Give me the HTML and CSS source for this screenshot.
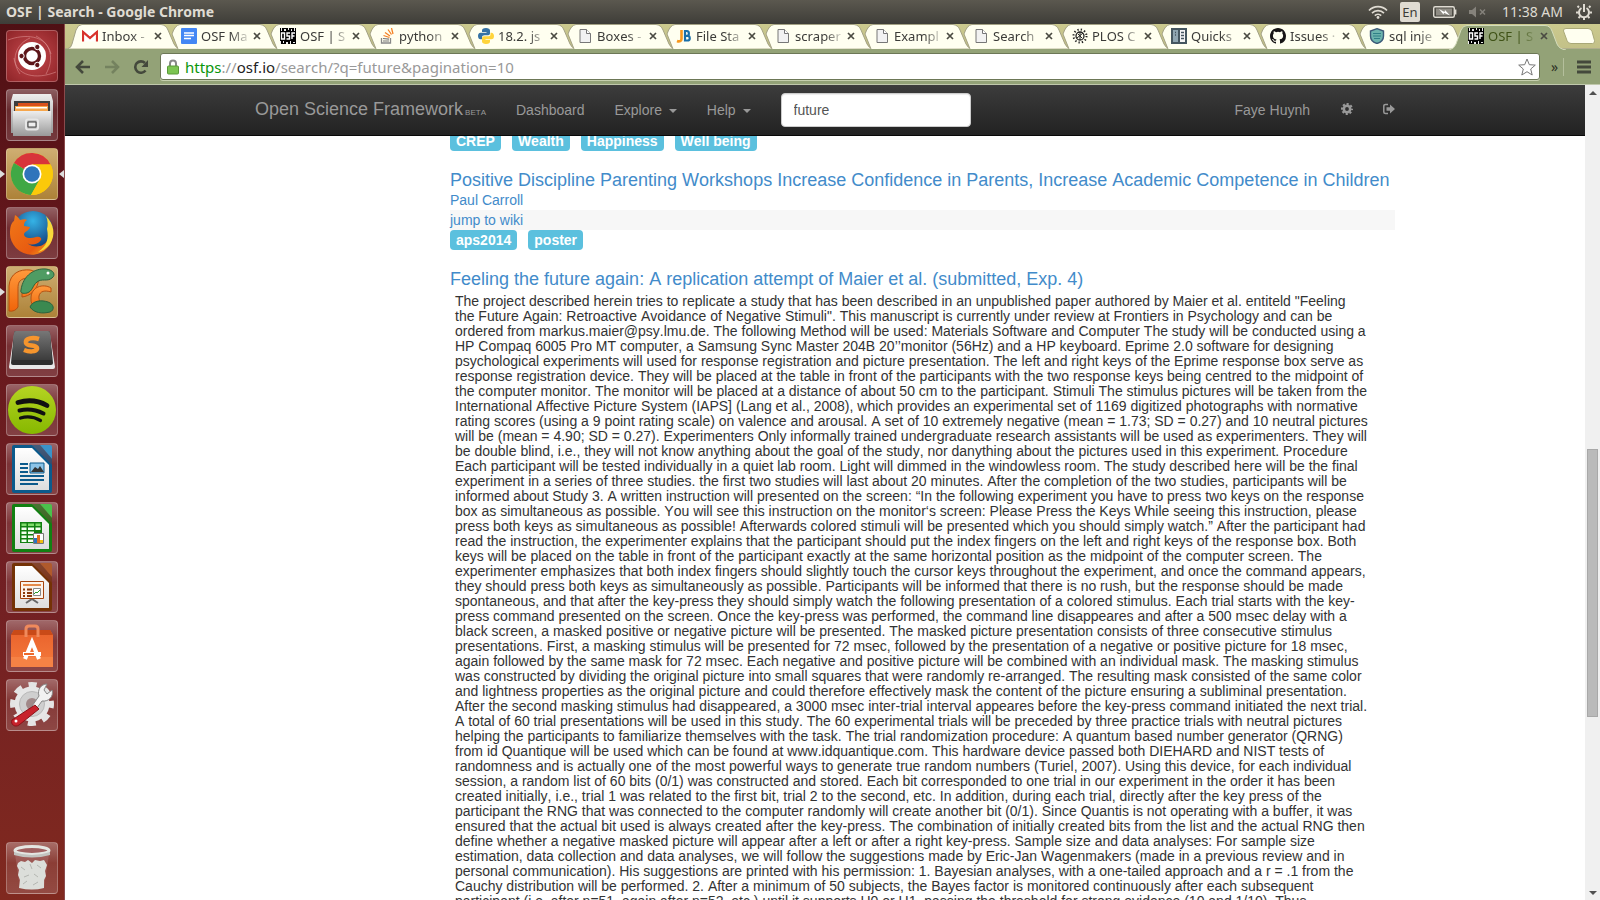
FILE: index.html
```html
<!DOCTYPE html>
<html lang="en">
<head>
<meta charset="utf-8">
<title>OSF | Search</title>
<link rel="stylesheet" href="styles.css">
</head>
<body>
<svg class="defs" aria-hidden="true">
  <defs>
    <linearGradient id="g-metal" x1="0" y1="0" x2="0" y2="1"><stop offset="0" stop-color="#eeeeee"/><stop offset="1" stop-color="#999"/></linearGradient>
    <linearGradient id="g-key" x1="0" y1="0" x2="0" y2="1"><stop offset="0" stop-color="#777"/><stop offset="1" stop-color="#3c3c3c"/></linearGradient>
    <linearGradient id="g-orange" x1="0" y1="0" x2="0" y2="1"><stop offset="0" stop-color="#ff9a3c"/><stop offset="1" stop-color="#f0640a"/></linearGradient>
    <linearGradient id="g-bag" x1="0" y1="0" x2="0" y2="1"><stop offset="0" stop-color="#e9622c"/><stop offset="1" stop-color="#f47a3c"/></linearGradient>
    <radialGradient id="g-globe" cx=".5" cy=".25" r=".7"><stop offset="0" stop-color="#35b3e6"/><stop offset="1" stop-color="#123a78"/></radialGradient>
    <linearGradient id="g-fox" x1="0" y1="0" x2="1" y2="1"><stop offset="0" stop-color="#f07818"/><stop offset=".7" stop-color="#e85a10"/><stop offset="1" stop-color="#f8b020"/></linearGradient>
    <linearGradient id="g-spot" x1="0" y1="0" x2="0" y2="1"><stop offset="0" stop-color="#b5d422"/><stop offset="1" stop-color="#86b800"/></linearGradient>
    <linearGradient id="g-page" x1="0" y1="0" x2="0" y2="1"><stop offset="0" stop-color="#fff"/><stop offset="1" stop-color="#dedede"/></linearGradient>
    <symbol id="tab-shape" viewBox="0 0 111 25"><path d="M11 25 L5 10 Q8 1 13 .5 H93 Q98 1 100 6 L106 20 Q108 24 111 24.500" class="tab-path"/></symbol>
    <symbol id="tab-first" viewBox="0 0 111 25"><path d="M0 24.500 Q3 24 4 20 L8 6 Q10 .5 14 .5 H93 Q98 1 100 6 L106 20 Q108 24 111 24.500" class="tab-path"/></symbol>
    <symbol id="tab-on" viewBox="0 0 117 26"><path d="M0 26 Q5 25 7 20 L12 6 Q14 1.500 18 1.500 H96 Q101 1.500 103 7 L108 20 Q110 25 117 26" class="tab-path-on"/></symbol>
    <symbol id="i-x" viewBox="0 0 8 8"><path d="M1 1 7 7M7 1 1 7" stroke="#4a4a42" stroke-width="1.700"/></symbol>
    <symbol id="i-doc" viewBox="0 0 16 16"><path d="M3 1.500h6.500l4 4v9H3z" fill="#f2f2f2" stroke="#777"/><path d="M9.500 1.500v4h4" fill="#fff" stroke="#777"/></symbol>
    <symbol id="i-osf" viewBox="0 0 16 16"><path d="M0 0h16v16H0z" fill="#000"/><path d="M1 0h1v3H1zM4 1h2v2H4zM8 0h1v2H8zM11 1h1v2h-1zM14 0h1v3h-1zM0 13h1v3H0zM3 13h1v2H3zM6 14h2v2H6zM10 13h1v3h-1zM13 14h2v1h-2z" fill="#eee"/><path d="M1.500 5h3v6h-3zM10 5h-3v3h2.500v3H6.500M15 5h-3v6M12 8h2.500" fill="none" stroke="#fff" stroke-width="1.400"/></symbol>
  </defs>
</svg>

<header class="panel">
  <span class="panel-title">OSF | Search - Google Chrome</span>
  <div class="panel-tray">
    <svg class="wifi" viewBox="0 0 20 14"><g fill="none" stroke="#dfdbd2" stroke-width="1.700"><path d="M1 5.500a12.500 12.500 0 0 1 18 0M4 8.200a8.500 8.500 0 0 1 12 0M6.800 10.600a4.600 4.600 0 0 1 6.400 0"/></g><circle cx="10" cy="12.500" r="1.400" fill="#dfdbd2"/></svg>
    <span class="lang">En</span>
    <svg class="batt" viewBox="0 0 24 14"><rect x=".7" y="1.700" width="20.600" height="10.600" rx="1.500" fill="none" stroke="#dfdbd2" stroke-width="1.400"/><path d="M22.500 4.500v5" stroke="#dfdbd2" stroke-width="1.800"/><path d="M3 3.500h16v7H3z" fill="#8f8c84"/><path d="M6 4 11.500 7 12 5 17 10.500 11 7.800 10.500 9.500z" fill="#fff"/></svg>
    <svg class="mute" viewBox="0 0 18 12"><path d="M0 4h3l4-3.500v11L3 8H0z" fill="#85827b"/><path d="m11 3.500 5 5m0-5-5 5" stroke="#85827b" stroke-width="1.500"/></svg>
    <span class="clock">11:38 AM</span>
    <svg class="power" viewBox="0 0 16 16"><g fill="none" stroke="#dfdbd2"><path d="M5.500 4a5 5 0 1 0 5 0" stroke-width="2"/><path d="M8 0v8" stroke-width="2"/><path d="M3 3.500 1.500 2M13 3.500 14.500 2M2.500 8.500H0M13.500 8.500H16M4 12.500 2.500 14M12 12.500 13.500 14M8 13.500V16" stroke-width="2"/></g></svg>
  </div>
</header>

<div class="desktop">
  <nav class="launcher" aria-label="Launcher">
    <button class="tile red" aria-label="Dash"><svg viewBox="0 0 52 52"><g fill="none" stroke="#e5a0a0" stroke-opacity=".5"><path d="M2 10C18 4 40 4 45 24M50 42C30 50 10 46 8 28M30 6c16 8 18 24 10 38M14 44C4 30 10 14 24 8"/></g><circle cx="26" cy="26" r="14" fill="#fff"/><circle cx="26" cy="26" r="7.500" fill="none" stroke="#5d1519" stroke-width="3.400"/><g fill="#5d1519" stroke="#fff"><circle cx="15.500" cy="26" r="2.700"/><circle cx="31.300" cy="17" r="2.700"/><circle cx="31.300" cy="35" r="2.700"/></g></svg></button>
    <button class="tile" aria-label="Files"><svg viewBox="0 0 52 52"><path d="M7 5h38l2 7v32H5V12z" fill="url(#g-metal)"/><path d="M8 12h36v12H8z" fill="#3d3d3d"/><path d="M12 14h30v9H12z" fill="#d8501c"/><path d="M9 17h33v6H9z" fill="#f6a64c"/><path d="M10 18h31v1.500H10z" fill="#fff"/><path d="M7 22h38v25H7z" fill="url(#g-metal)"/><rect x="20" y="30.500" width="12" height="10" rx="2" fill="#aaa" stroke="#e6e6e6" stroke-width="2"/><path d="M22 33h8v5h-8z" fill="#eee" stroke="#444"/></svg></button>
    <button class="tile gold run focus" aria-label="Google Chrome"><svg viewBox="0 0 52 52"><circle cx="26" cy="26" r="21" fill="#fbc90a"/><path d="M26 26 8 15A21 21 0 0 1 44.500 16.500H26z" fill="#d8343a"/><path d="M26 26 8 15A21 21 0 0 0 25 47L34 31z" fill="#3fa845"/><path d="M26 16.500h18.500A21 21 0 0 1 25 47l9-16z" fill="#fbc90a"/><circle cx="26" cy="26" r="9.500" fill="#fff"/><circle cx="26" cy="26" r="7.800" fill="#2f74bb"/></svg></button>
    <button class="tile" aria-label="Firefox"><svg viewBox="0 0 52 52"><circle cx="27" cy="24" r="20" fill="url(#g-globe)"/><path d="M4 27C4 20 5 16 8 14l1-6c2 1 4 3 5 5 3-1 6-1 7 0-3 2-3 4-3 6l6 1c-1 4-5 4-6 7 0 4 6 5 12 3 4-1 6 1 5 3-4 6-12 5-14 3 7 6 18 4 21-4 2-6 0-9 1-14 5 8 4 18-2 23-8 9-22 9-31 0-4-5-6-9-6-14z" fill="url(#g-fox)"/><path d="M40 9c8 8 10 19 4 28-4 5-8 7-12 8 9-6 11-13 9-23 1-4 1-8-1-13z" fill="#f9d83b"/></svg></button>
    <button class="tile gold run" aria-label="PyCharm"><svg viewBox="0 0 52 52"><path d="M3 45V20C4 7 14 3 24 4c7 1 9 6 8 13-2 8-8 13-16 14v-7c5-1 8-3 8-8 0-4-4-4-7-3-5 2-5 6-5 11v17q-3 5-9 4z" fill="url(#g-orange)" stroke="#b65010"/><path d="M45 22c-8-5-20-1-20 10-1 9 8 14 18 13v-5c-7-1-11-5-10-10 1-5 6-6 12-4z" fill="url(#g-orange)" stroke="#b65010"/><path d="M15 24C17 9 29 2 40 3c8 1 10 6 6 9-5 4-10 0-15 4-5 4-4 9-10 11-4 1-7 0-6-3z" fill="#4f9c63" stroke="#2c633d"/><path d="M24 41c3-7 12-7 18-5 6 2 7 8 2 10-8 2-16 1-20-5z" fill="#3b8950" stroke="#2c633d"/><circle cx="42" cy="7" r="1.500" fill="#fff"/></svg></button>
    <button class="tile" aria-label="Sublime Text"><svg viewBox="0 0 52 52"><path d="M8 9h36l5 33q0 2-2 2H5q-2 0-2-2z" fill="#e8e8e8"/><path d="M10 6h32q2 0 2 2l3 30q0 2-2 2H7q-2 0-2-2L8 8q0-2 2-2z" fill="#2e2e2e"/><path d="M10 6h32q2 0 2 2l2 27H6L8 8q0-2 2-2z" fill="url(#g-key)"/><path d="M33 14c-6-2-14-1-13 4 1 4 12 1 11 6-1 3-8 3-13 1" fill="none" stroke="#f6952d" stroke-width="4.500"/></svg></button>
    <button class="tile" aria-label="Spotify"><svg viewBox="0 0 52 52"><circle cx="26" cy="26" r="24" fill="url(#g-spot)"/><g fill="none" stroke="#111" stroke-linecap="round"><path d="M12 18.500c10-3 21-1.500 29 3" stroke-width="4.800"/><path d="M13.500 26.500c8-2 16-1 24 3" stroke-width="4"/><path d="M14.500 34c7-2 14-1 20 2.500" stroke-width="3.200"/></g></svg></button>
    <button class="tile" aria-label="Writer"><svg viewBox="0 0 52 52"><path d="M8 2h18l20 20v26q0 2-2 2H8q-2 0-2-2V4q0-2 2-2z" fill="#0b5a8c"/><path d="M34 2h10q2 0 2 2v12z" fill="#3a92c8"/><path d="M26 2h8l12 14v8z" fill="#0b5a8c" fill-opacity=".6"/><path d="M9 5h17l17 17v25H9z" fill="url(#g-page)"/><path d="M14 21h8M14 25h8M14 29h8M14 33h24M14 37h24M14 41h18" stroke="#0b5a8c" stroke-width="2"/><path d="M24 20h14v10H24z" fill="#8cc4e8" stroke="#0b5a8c"/><path d="m25 29 4-5 3 2 2-3 4 6z" fill="#333"/></svg></button>
    <button class="tile" aria-label="Calc"><svg viewBox="0 0 52 52"><path d="M8 2h18l20 20v26q0 2-2 2H8q-2 0-2-2V4q0-2 2-2z" fill="#128012"/><path d="M34 2h10q2 0 2 2v12z" fill="#4bc14b"/><path d="M26 2h8l12 14v8z" fill="#128012" fill-opacity=".6"/><path d="M9 5h17l17 17v25H9z" fill="url(#g-page)"/><path d="M14 20h22v21H14z" fill="#128012"/><path d="M15.500 21.500h5v2.500h-5zM22 21.500h6v2.500h-6zM29.500 21.500h5v2.500h-5z" fill="#7fdc6a"/><path d="M15.500 25.500h5V28h-5zM22 25.500h6V28h-6zM29.500 25.500h5V28h-5zM15.500 29.500h5V32h-5zM22 29.500h6V32h-6zM15.500 33.500h5V36h-5zM22 33.500h6V36h-6zM15.500 37.500h5V40h-5zM22 37.500h6V40h-6z" fill="#f4fff0"/><path d="M27.500 31.500h10v10h-10z" fill="#fff" stroke="#777"/><path d="M28 36h3v5h-3z" fill="#2a74c0"/><path d="M31 33h3v8h-3z" fill="#e07020"/><path d="M34 38h3v3h-3z" fill="#f0c010"/></svg></button>
    <button class="tile" aria-label="Impress"><svg viewBox="0 0 52 52"><path d="M8 2h18l20 20v26q0 2-2 2H8q-2 0-2-2V4q0-2 2-2z" fill="#743206"/><path d="M34 2h10q2 0 2 2v12z" fill="#b05a2c"/><path d="M26 2h8l12 14v8z" fill="#743206" fill-opacity=".6"/><path d="M9 5h17l17 17v25H9z" fill="url(#g-page)"/><path d="M20 42 26 38l6 4" fill="none" stroke="#666" stroke-width="2"/><path d="M14.500 20.500h23v17h-23z" fill="#fdf3ea" stroke="#a5430c"/><path d="M17 24h18" stroke="#e58a4a" stroke-width="2"/><path d="M17 28.500h2M17 32h2M17 35h2M21 28.500h5M21 32h5M21 35h5" stroke="#8b3a0c" stroke-width="2"/><path d="M27.500 27.500h7v7h-7z" fill="#fff" stroke="#888"/><path d="m28 33 2-2 1 1 3-3" fill="none" stroke="#2a9a2a"/></svg></button>
    <button class="tile" aria-label="Software Center"><svg viewBox="0 0 52 52"><path d="M8 10h36l3 5v32H5V15z" fill="url(#g-bag)"/><path d="M5 15 8 10h36l3 5z" fill="#c94a18"/><path d="M5 37h42v10H5z" fill="#f58245"/><path d="M20 17V9q0-3 3-3h6q3 0 3 3v8" fill="none" stroke="#f08a5c" stroke-width="3"/><path d="M19 39 26 22l7 17" fill="none" stroke="#fff" stroke-width="4"/><path d="M17 32h18v4H17z" fill="#fff"/><path d="M18 33h10v2H18z" fill="#ee6a2c"/></svg></button>
    <button class="tile" aria-label="System Settings"><svg viewBox="0 0 52 52"><circle cx="26" cy="25" r="19" fill="none" stroke="#e4e4e4" stroke-width="6" stroke-dasharray="8 6.923" stroke-dashoffset="4"/><circle cx="26" cy="25" r="17.500" fill="#e6e6e6"/><circle cx="26" cy="25" r="12.500" fill="#cfcfcf" stroke="#b8b8b8"/><circle cx="26" cy="25" r="6" fill="#a08888"/><path d="m24 30 9-13c-2-6 2-12 8-12l-3 6 3 4 5-4c2 6-3 12-10 11l-8 11z" fill="#f2f2f2" stroke="#888"/><path d="m29 26 4 4-20 16c-4 3-9-1-7-5z" fill="#c8232c" stroke="#8a1218"/><circle cx="10" cy="42" r="1.500" fill="#fff"/></svg></button>
    <button class="tile trash" aria-label="Trash"><svg viewBox="0 0 52 52"><path d="M9 12h34l-5 34q-12 3-24 0z" fill="#b47a7a" fill-opacity=".4"/><path d="m12 21 3-2 4 1 3-2 4 3 3-3 5 1 4-1 3 5-2 6 1 5-2 4v8q-12 3-25 0l1-8-2-5 1-5-2-4z" fill="#dcdeda"/><path d="m15 25 4 3M24 22l2 5M31 23l4 3M18 35l5-2M28 32l4 3M17 42l4-3M27 43l5-3" fill="none" stroke="#b4b6b1"/><ellipse cx="26" cy="8.500" rx="17" ry="4" fill="#a06060" stroke="#e4e6e2" stroke-width="3"/><path d="M8 10q18 6 36 0v3q-18 5-36 0z" fill="#c2c4c0"/></svg></button>
  </nav>

  <section class="browser">
    <div class="tabs">
      <div class="tab"><svg class="shape first"><use href="#tab-first"/></svg><svg class="fav" viewBox="0 0 16 16"><path d="M0 2.500h16v11H0z" fill="#fff"/><path d="M1 13.500V4l7 6 7-6v9.500" fill="none" stroke="#d8322c" stroke-width="2.200"/><path d="m1 3 7 6.500L15 3" fill="none" stroke="#d8322c"/></svg><span class="tab-name">Inbox -</span><button class="tab-x" aria-label="Close"><svg viewBox="0 0 8 8"><use href="#i-x"/></svg></button></div>
      <div class="tab"><svg class="shape"><use href="#tab-shape"/></svg><svg class="fav" viewBox="0 0 16 16"><rect width="16" height="16" rx="1" fill="#4387f4"/><path d="M3 5h10M3 7.500h10M3 10.500h7" stroke="#fff" stroke-width="1.300"/></svg><span class="tab-name">OSF Ma</span><button class="tab-x" aria-label="Close"><svg viewBox="0 0 8 8"><use href="#i-x"/></svg></button></div>
      <div class="tab"><svg class="shape"><use href="#tab-shape"/></svg><svg class="fav"><use href="#i-osf"/></svg><span class="tab-name">OSF | S</span><button class="tab-x" aria-label="Close"><svg viewBox="0 0 8 8"><use href="#i-x"/></svg></button></div>
      <div class="tab"><svg class="shape"><use href="#tab-shape"/></svg><svg class="fav" viewBox="0 0 16 16"><path d="M2.500 10v5h9v-5" fill="none" stroke="#888" stroke-width="1.300"/><path d="M4 13h6M4 10.500l6 .6" stroke="#777" stroke-width="1.200"/><path d="m4.500 7.500 6 2M6 4.500l5 3.500M9 1.500l3.500 5M12.500 0l1.500 6" stroke="#f48024" stroke-width="1.300"/></svg><span class="tab-name">python</span><button class="tab-x" aria-label="Close"><svg viewBox="0 0 8 8"><use href="#i-x"/></svg></button></div>
      <div class="tab"><svg class="shape"><use href="#tab-shape"/></svg><svg class="fav" viewBox="0 0 16 16"><path d="M8 0c-3 0-4 1-4 2.500V4h4.500v.7H2.500C.8 4.700 0 6 0 8s1 3.300 2.500 3.300H4V9.500C4 8 5 7.300 6.500 7.300h3.700c1 0 1.800-.8 1.800-2V2.500C12 1 10.500 0 8 0z" fill="#3572a5"/><path d="M8 16c3 0 4-1 4-2.500V12H7.500v-.7h6c1.700 0 2.500-1.300 2.500-3.300s-1-3.300-2.500-3.300h-1v1.800C12.500 8 11 8.300 9.500 8.300H6c-1 0-2 .8-2 2v3.200C4 15 5.500 16 8 16z" fill="#ffd43b"/></svg><span class="tab-name">18.2. js</span><button class="tab-x" aria-label="Close"><svg viewBox="0 0 8 8"><use href="#i-x"/></svg></button></div>
      <div class="tab"><svg class="shape"><use href="#tab-shape"/></svg><svg class="fav"><use href="#i-doc"/></svg><span class="tab-name">Boxes -</span><button class="tab-x" aria-label="Close"><svg viewBox="0 0 8 8"><use href="#i-x"/></svg></button></div>
      <div class="tab"><svg class="shape"><use href="#tab-shape"/></svg><svg class="fav" viewBox="0 0 16 16"><path d="M5.500 2v9c0 2-2 3-4.500 2" fill="none" stroke="#f8981d" stroke-width="2.600"/><path d="M9 3v9.500h2.500c3 0 3-4.700 0-4.700H9h2c2.500 0 2.500-4.800 0-4.800z" fill="none" stroke="#1a6fa8" stroke-width="2.200"/></svg><span class="tab-name">File Sta</span><button class="tab-x" aria-label="Close"><svg viewBox="0 0 8 8"><use href="#i-x"/></svg></button></div>
      <div class="tab"><svg class="shape"><use href="#tab-shape"/></svg><svg class="fav"><use href="#i-doc"/></svg><span class="tab-name">scraper</span><button class="tab-x" aria-label="Close"><svg viewBox="0 0 8 8"><use href="#i-x"/></svg></button></div>
      <div class="tab"><svg class="shape"><use href="#tab-shape"/></svg><svg class="fav"><use href="#i-doc"/></svg><span class="tab-name">Exampl</span><button class="tab-x" aria-label="Close"><svg viewBox="0 0 8 8"><use href="#i-x"/></svg></button></div>
      <div class="tab"><svg class="shape"><use href="#tab-shape"/></svg><svg class="fav"><use href="#i-doc"/></svg><span class="tab-name">Search</span><button class="tab-x" aria-label="Close"><svg viewBox="0 0 8 8"><use href="#i-x"/></svg></button></div>
      <div class="tab"><svg class="shape"><use href="#tab-shape"/></svg><svg class="fav" viewBox="0 0 16 16"><circle cx="8" cy="8" r="6.500" fill="none" stroke="#222" stroke-width="2" stroke-dasharray="1.300 2.100"/><circle cx="8" cy="8" r="4" fill="none" stroke="#222" stroke-width="1.300"/><path d="m5 10 6-5M6 6l4 4M8 4v8" stroke="#222"/></svg><span class="tab-name">PLOS C</span><button class="tab-x" aria-label="Close"><svg viewBox="0 0 8 8"><use href="#i-x"/></svg></button></div>
      <div class="tab"><svg class="shape"><use href="#tab-shape"/></svg><svg class="fav" viewBox="0 0 16 16"><path d="M0 0h16v16H0z" fill="#45565f"/><path d="M2 2h5v12H2z" fill="#8fa5b0"/><path d="M9 2h5v12H9z" fill="#f4f4f4"/><path d="M10 4.500h3M10 7.500h3M10 10.500h3M4 4.500h1M4 7h1" stroke="#45565f" stroke-width="1.400"/></svg><span class="tab-name">Quicks</span><button class="tab-x" aria-label="Close"><svg viewBox="0 0 8 8"><use href="#i-x"/></svg></button></div>
      <div class="tab"><svg class="shape"><use href="#tab-shape"/></svg><svg class="fav" viewBox="0 0 16 16"><path fill="#171515" d="M8 0C3.580 0 0 3.580 0 8c0 3.540 2.290 6.530 5.470 7.590.4.070.55-.17.55-.38 0-.19-.01-.82-.01-1.490-2.010.37-2.530-.49-2.690-.94-.09-.23-.48-.94-.82-1.130-.28-.15-.68-.52-.01-.53.63-.01 1.080.58 1.230.82.72 1.210 1.870.87 2.330.66.070-.52.28-.87.51-1.070-1.780-.2-3.640-.89-3.640-3.950 0-.87.31-1.590.82-2.150-.08-.2-.36-1.020.08-2.120 0 0 .67-.21 2.200.82a7.600 7.600 0 0 1 4 0c1.530-1.040 2.200-.82 2.200-.82.44 1.100.16 1.920.08 2.120.51.56.82 1.270.82 2.150 0 3.070-1.870 3.750-3.650 3.950.29.25.54.73.54 1.480 0 1.070-.01 1.930-.01 2.200 0 .21.15.46.55.38A8 8 0 0 0 16 8c0-4.420-3.580-8-8-8z"/></svg><span class="tab-name">Issues ·</span><button class="tab-x" aria-label="Close"><svg viewBox="0 0 8 8"><use href="#i-x"/></svg></button></div>
      <div class="tab"><svg class="shape"><use href="#tab-shape"/></svg><svg class="fav" viewBox="0 0 16 16"><path d="M8 .7 14.500 3v5c0 4-3 6.500-6.500 7.500C4.500 14.500 1.500 12 1.500 8V3z" fill="#6cb3ad" stroke="#3b5a78" stroke-width="1.400"/><path d="M4 5.500h8M4 8h8M5 10.500h6" stroke="#2e7f86"/></svg><span class="tab-name">sql inje</span><button class="tab-x" aria-label="Close"><svg viewBox="0 0 8 8"><use href="#i-x"/></svg></button></div>
      <div class="tab on"><svg class="shape"><use href="#tab-on"/></svg><svg class="fav"><use href="#i-osf"/></svg><span class="tab-name">OSF | S</span><button class="tab-x" aria-label="Close"><svg viewBox="0 0 8 8"><use href="#i-x"/></svg></button></div>
      <button class="new-tab" aria-label="New tab"><svg viewBox="0 0 32 16"><path d="M3 .5h22q3 0 4 3l2.500 9q.5 3-2 3H8q-3 0-4-3L.5 3Q0 .5 3 .5z" fill="#fffff0" stroke="#a9a878"/></svg></button>
    </div>

    <div class="toolbar">
      <button class="tool" aria-label="Back"><svg viewBox="0 0 16 14"><path d="M8 1 2 7l6 6M2.500 7H15" fill="none" stroke="#44493c" stroke-width="2.600"/></svg></button>
      <button class="tool" aria-label="Forward"><svg viewBox="0 0 16 14"><path d="m8 1 6 6-6 6M13.500 7H1" fill="none" stroke="#74825f" stroke-width="2.600"/></svg></button>
      <button class="tool" aria-label="Reload"><svg viewBox="0 0 16 14"><path d="M12.500 10.500A5.700 5.700 0 1 1 12 3" fill="none" stroke="#44493c" stroke-width="2.600"/><path d="M15 0v7H8.500z" fill="#44493c"/></svg></button>
      <div class="omnibox">
        <svg class="lock" viewBox="0 0 12 16"><path d="M3 8V4.500a3 3 0 0 1 6 0V8" fill="none" stroke="#888" stroke-width="2"/><rect x=".5" y="7" width="11" height="8" rx="1" fill="#7cc552" stroke="#5a9a38"/></svg>
        <div class="url"><span class="scheme">https</span>://<span class="host">osf.io</span>/search/?q=future&amp;pagination=10</div>
        <svg class="star" viewBox="0 0 18 18"><path d="m9 1 2.300 5.700 6 .4-4.600 3.900 1.500 6L9 13.700 3.800 17l1.500-6L.7 7.100l6-.4z" fill="#fff" stroke="#777"/></svg>
      </div>
      <span class="more">»</span>
      <button class="menu" aria-label="Menu"><svg viewBox="0 0 14 14"><path d="M0 2h14M0 7h14M0 12h14" stroke="#44493c" stroke-width="3"/></svg></button>
    </div>

    <div class="viewport">
      <div class="page">
        <nav class="navbar">
          <div class="container">
            <a class="brand" href="#">Open Science Framework<small>BETA</small></a>
            <a class="nav-link" href="#">Dashboard</a>
            <a class="nav-link" href="#">Explore <i class="caret"></i></a>
            <a class="nav-link" href="#">Help <i class="caret"></i></a>
            <form class="search"><input type="text" value="future" aria-label="Search"></form>
            <a class="nav-link user" href="#">Faye Huynh</a>
            <a class="nav-link" href="#" aria-label="Settings"><svg class="ico" viewBox="0 0 12 12"><circle cx="6" cy="6" r="3.200" fill="none" stroke="#999" stroke-width="2.600"/><circle cx="6" cy="6" r="5" fill="none" stroke="#999" stroke-width="2" stroke-dasharray="2.100 1.827" stroke-dashoffset="1"/></svg></a>
            <a class="nav-link" href="#" aria-label="Log out"><svg class="ico" viewBox="0 0 12 12"><path d="M5 1.500H2.500Q.8 1.500.8 3v6q0 1.500 1.700 1.500H5" fill="none" stroke="#999" stroke-width="1.500"/><path d="M3.500 4.200H7V1.500L12 6l-5 4.500V7.800H3.500z" fill="#999"/></svg></a>
          </div>
        </nav>
        <main class="container results">
          <div class="col">
            <div class="tags"><a href="#">CREP</a><a href="#">Wealth</a><a href="#">Happiness</a><a href="#">Well being</a></div>
            <article>
              <h4><a href="#">Positive Discipline Parenting Workshops Increase Confidence in Parents, Increase Academic Competence in Children</a></h4>
              <div><a href="#">Paul Carroll</a></div>
              <div class="wiki"><a href="#">jump to wiki</a></div>
              <div class="tags"><a href="#">aps2014</a><a href="#">poster</a></div>
            </article>
            <article>
              <h4><a href="#">Feeling the future again: A replication attempt of Maier et al. (submitted, Exp. 4)</a></h4>
              <p class="desc">The project described herein tries to replicate a study that has been described in an unpublished paper authored by Maier et al. entiteld "Feeling
the Future Again: Retroactive Avoidance of Negative Stimuli". This manuscript is currently under review at Frontiers in Psychology and can be
ordered from markus.maier@psy.lmu.de. The following Method will be used: Materials Software and Computer The study will be conducted using a
HP Compaq 6005 Pro MT computer, a Samsung Sync Master 204B 20’’monitor (56Hz) and a HP keyboard. Eprime 2.0 software for designing
psychological experiments will used for response registration and picture presentation. The left and right keys of the Eprime response box serve as
response registration device. They will be placed at the table in front of the participants with the two response keys being centred to the midpoint of
the computer monitor. The monitor will be placed at a distance of about 50 cm to the participant. Stimuli The stimulus pictures will be taken from the
International Affective Picture System (IAPS] (Lang et al., 2008), which provides an experimental set of 1169 digitized photographs with normative
rating scores (using a 9 point rating scale) on valence and arousal. A set of 10 extremely negative (mean = 1.73; SD = 0.27) and 10 neutral pictures
will be (mean = 4.90; SD = 0.27). Experimenters Only informally trained undergraduate research assistants will be used as experimenters. They will
be double blind, i.e., they will not know anything about the goal of the study, nor danything about the pictures used in this experiment. Procedure
Each participant will be tested individually in a quiet lab room. Light will dimmed in the windowless room. The study described here will be the final
experiment in a series of three studies. the first two studies will last about 20 minutes. After the completion of the two studies, participants will be
informed about Study 3. A written instruction will presented on the screen: “In the following experiment you have to press two keys on the response
box as simultaneous as possible. You will see this instruction on the monitor‘s screen: Please Press the Keys While seeing this instruction, please
press both keys as simultaneous as possible! Afterwards colored stimuli will be presented which you should simply watch.” After the participant had
read the instruction, the experimenter explains that the participant should put the index fingers on the left and right keys of the response box. Both
keys will be placed on the table in front of the participant exactly at the same horizontal position as the midpoint of the computer screen. The
experimenter emphasizes that both index fingers should slightly touch the cursor keys throughout the experiment, and once the command appears,
they should press both keys as simultaneously as possible. Participants will be informed that there is no rush, but the response should be made
spontaneous, and that after the key-press they should simply watch the following presentation of a colored stimulus. Each trial starts with the key-
press command presented on the screen. Once the key-press was performed, the command line disappeares and after a 500 msec delay with a
black screen, a masked positive or negative picture will be presented. The masked picture presentation consists of three consecutive stimulus
presentations. First, a masking stimulus will be presented for 72 msec, followed by the presentation of a negative or positive picture for 18 msec,
again followed by the same mask for 72 msec. Each negative and positive picture will be combined with an individual mask. The masking stimulus
was constructed by dividing the original picture into small squares that were randomly re-arranged. The resulting mask consisted of the same color
and lightness properties as the original picture and could therefore effectively mask the content of the picture ensuring a subliminal presentation.
After the second masking stimulus had disappeared, a 3000 msec inter-trial interval appeares before the key-press command initiated the next trial.
A total of 60 trial presentations will be used in this study. The 60 experimental trials will be preceded by three practice trials with neutral pictures
helping the participants to familiarize themselves with the task. The trial randomization procedure: A quantum based number generator (QRNG)
from id Quantique will be used which can be found at www.idquantique.com. This hardware device passed both DIEHARD and NIST tests of
randomness and is actually one of the most powerful ways to generate true random numbers (Turiel, 2007). Using this device, for each individual
session, a random list of 60 bits (0/1) was constructed and stored. Each bit corresponded to one trial in our experiment in the order it has been
created initially, i.e., trial 1 was related to the first bit, trial 2 to the second, etc. In addition, during each trial, directly after the key press of the
participant the RNG that was connected to the computer randomly will create another bit (0/1). Since Quantis is not operating with a buffer, it was
ensured that the actual bit used is always created after the key-press. The combination of initially created bits from the list and the actual RNG then
define whether a negative masked picture will appear after a left or after a right key-press. Sample size and data analyses: For sample size
estimation, data collection and data analyses, we will follow the suggestions made by Eric-Jan Wagenmakers (made in a previous review and in
personal communication). His suggestions are printed with his permission: 1. Bayesian analyses, with a one-tailed approach and a r = .1 from the
Cauchy distribution will be performed. 2. After a minimum of 50 subjects, the Bayes factor is monitored continuously after each subsequent
participant (i.e. after n=51, again after n=52, etc.) until it supports H0 or H1, passing the threshold for strong evidence (10 and 1/10). Thus</p>
            </article>
          </div>
        </main>
      </div>
      <div class="scrollbar">
        <i class="arrow up"></i><i class="gap-top"></i><i class="thumb"></i><i class="gap-bottom"></i><i class="arrow down"></i>
      </div>
    </div>
  </section>
</div>
</body>
</html>
```

FILE: styles.css
```css
* { box-sizing: border-box; }
html, body { height: 100%; }
body {
  margin: 0;
  display: flex;
  flex-direction: column;
  overflow: hidden;
  font: 14px/20px "Liberation Sans", Arial, sans-serif;
  font-kerning: none;
  color: #333;
  background: #fff;
}
button { border: 0; padding: 0; background: none; font: inherit; color: inherit; }
a { color: #428bca; text-decoration: none; }
svg { display: block; }
.defs { position: absolute; width: 0; height: 0; }

/* top panel */
.panel {
  flex: none;
  height: 24px;
  display: flex;
  align-items: center;
  justify-content: space-between;
  padding: 0 8px 0 6px;
  background: linear-gradient(#5b584f, #3e3d38);
  color: #dfdbd2;
  font-family: "Noto Sans", sans-serif;
  font-size: 14px;
}
.panel-title { font-weight: 700; }
.panel-tray { display: flex; align-items: center; }
.wifi { width: 20px; height: 14px; margin-right: 12px; }
.lang { width: 20px; height: 20px; margin-right: 13px; border-radius: 2px; background: #dfdbd2; color: #3c3b37; text-align: center; font-size: 13px; }
.batt { width: 24px; height: 14px; margin-right: 12px; }
.mute { width: 18px; height: 12px; margin-right: 15px; }
.clock { margin-right: 13px; }
.power { width: 16px; height: 16px; }

.desktop { flex: 1; min-height: 0; display: flex; }

/* launcher */
.launcher {
  flex: none;
  width: 65px;
  display: flex;
  flex-direction: column;
  gap: 7px;
  padding: 6px 7px 6px 6px;
  background: linear-gradient(#4f1014, #64171c 25%, #722023 65%, #80291f);
  border-right: 1px solid #8a4a4c;
}
.tile {
  position: relative;
  flex: none;
  width: 52px;
  height: 52px;
  border-radius: 4px;
  border: 1px solid rgba(255, 255, 255, .25);
  background: linear-gradient(rgba(255, 255, 255, .32), rgba(255, 255, 255, .1) 40%, rgba(255, 255, 255, .16));
}
.tile svg { width: 52px; height: 52px; margin: -1px; }
.tile.red { background: radial-gradient(#c84a4e, #8e2428); }
.tile.gold { background: linear-gradient(#cfae72, #ad8238); }
.tile.run::before, .tile.focus::after {
  content: "";
  position: absolute;
  top: 21px;
  border: 4px solid transparent;
}
.tile.run::before { left: -7px; border-left: 5px solid #ddd; border-right: 0; }
.tile.focus::after { right: -7px; border-right: 5px solid #ddd; border-left: 0; }
.trash { margin-top: auto; }

/* browser chrome */
.browser { flex: 1; min-width: 0; display: flex; flex-direction: column; }
.tabs {
  flex: none;
  height: 25px;
  display: flex;
  align-items: center;
  padding-left: 3px;
  background: linear-gradient(#cbc98e, #c3c188);
  border-bottom: 1px solid #b0ae8c;
  font-family: "Noto Sans", sans-serif;
  color: #3b3b38;
}
.tab {
  position: relative;
  flex: none;
  width: 99px;
  height: 25px;
  display: flex;
  align-items: center;
  padding-left: 14px;
}
.shape { position: absolute; left: 0; top: 0; width: 111px; height: 25px; }
.tab-path { fill: #fffff0; stroke: #a3a184; }
.tab-path-on { fill: #93a277; stroke: #d4dcbc; }
.on .shape { left: -5px; width: 117px; height: 26px; }
.fav { position: relative; flex: none; width: 16px; height: 16px; }
.tab-name {
  position: relative;
  flex: none;
  width: 50px;
  margin-left: 4px;
  overflow: hidden;
  white-space: pre;
  font-size: 13px;
  -webkit-mask-image: linear-gradient(90deg, #000 60%, transparent);
  mask-image: linear-gradient(90deg, #000 60%, transparent);
}
.on .tab-name { color: #3f5216; }
.tab-x { position: relative; margin-left: 2px; }
.tab-x svg { width: 8px; height: 8px; }
.new-tab { margin-left: 10px; }
.new-tab svg { width: 32px; height: 16px; }

.toolbar {
  flex: none;
  height: 36px;
  display: flex;
  align-items: center;
  padding: 0 9px 0 10px;
  background: #93a277;
  border-bottom: 1px solid #c0c8ac;
}
.tool { margin-right: 13px; }
.tool:nth-child(3) { margin-right: 11px; }
.tool svg { width: 16px; height: 14px; }
.omnibox {
  flex: 1;
  height: 27px;
  display: flex;
  align-items: center;
  padding: 0 3px 0 6px;
  background: #fff;
  border: 1px solid #6c7756;
  border-radius: 3px;
  box-shadow: 0 1px 0 #c5cfae;
  font-family: "Noto Sans", sans-serif;
  font-size: 15px;
  color: #999;
}
.lock { width: 12px; height: 16px; margin-right: 6px; }
.url { flex: 1; }
.scheme { color: #0a960a; }
.host { color: #222; }
.star { width: 18px; height: 18px; }
.more { width: 13px; margin: 0 13px 0 11px; border-right: 1px solid #b4bf9c; font: 14px/18px "Noto Sans", sans-serif; color: #2c3024; }
.menu svg { width: 14px; height: 14px; }

/* web page */
.viewport { flex: 1; min-height: 0; display: flex; }
.page { flex: 1; min-width: 0; overflow: hidden; }
.container { width: 100%; max-width: 1170px; margin: 0 auto; padding: 0 15px; }
.navbar {
  position: relative;
  z-index: 1;
  height: 51px;
  background: linear-gradient(#3c3c3c, #222);
  border-bottom: 1px solid #080808;
}
.navbar .container { display: flex; align-items: baseline; padding-top: 8px; }
.navbar a { color: #999; }
.brand { font-size: 18px; margin-right: 15px; }
.brand small { font-size: 8px; margin-left: 2px; }
.nav-link { padding: 0 15px; }
.nav-link:last-child { padding-right: 0; }
.nav-link.user { padding-right: 16px; }
.caret { display: inline-block; margin-left: 3px; vertical-align: middle; border: 4px solid transparent; border-top-color: #999; border-bottom: 0; }
.search { margin: 0 auto 0 15px; }
.search input {
  width: 190px;
  height: 34px;
  padding: 6px 12px;
  border: 1px solid #ccc;
  border-radius: 4px;
  font: inherit;
  color: #555;
  box-shadow: inset 0 1px 1px rgba(0, 0, 0, .075);
}
.ico { width: 12px; height: 12px; }

.results { display: flex; margin-top: -5px; }
.col { flex: none; width: 100%; padding-left: 195px; }
.tags { display: flex; gap: 11px; margin-bottom: 19px; }
.tags a { padding: 0 6px; border-radius: 4px; background: #5bc0de; color: #fff; font-weight: 700; }
h4 { margin: 0; font-size: 18px; line-height: 20px; font-weight: 400; white-space: nowrap; }
.wiki { background: #f7f7f7; }
.desc { margin: 5px; line-height: 15px; white-space: pre; }

.scrollbar { flex: none; width: 15px; display: flex; flex-direction: column; align-items: center; background: #f0f0f0; }
.arrow { flex: none; margin: 6px 0 5px; border: 4px solid transparent; }
.arrow.up { border-bottom-color: #505050; border-top: 0; }
.arrow.down { border-top-color: #505050; border-bottom: 0; }
.gap-top { flex: 350; }
.thumb { flex: 267; width: 11px; background: #bababa; border: 1px solid #a8a8a8; }
.gap-bottom { flex: 168; }
```
